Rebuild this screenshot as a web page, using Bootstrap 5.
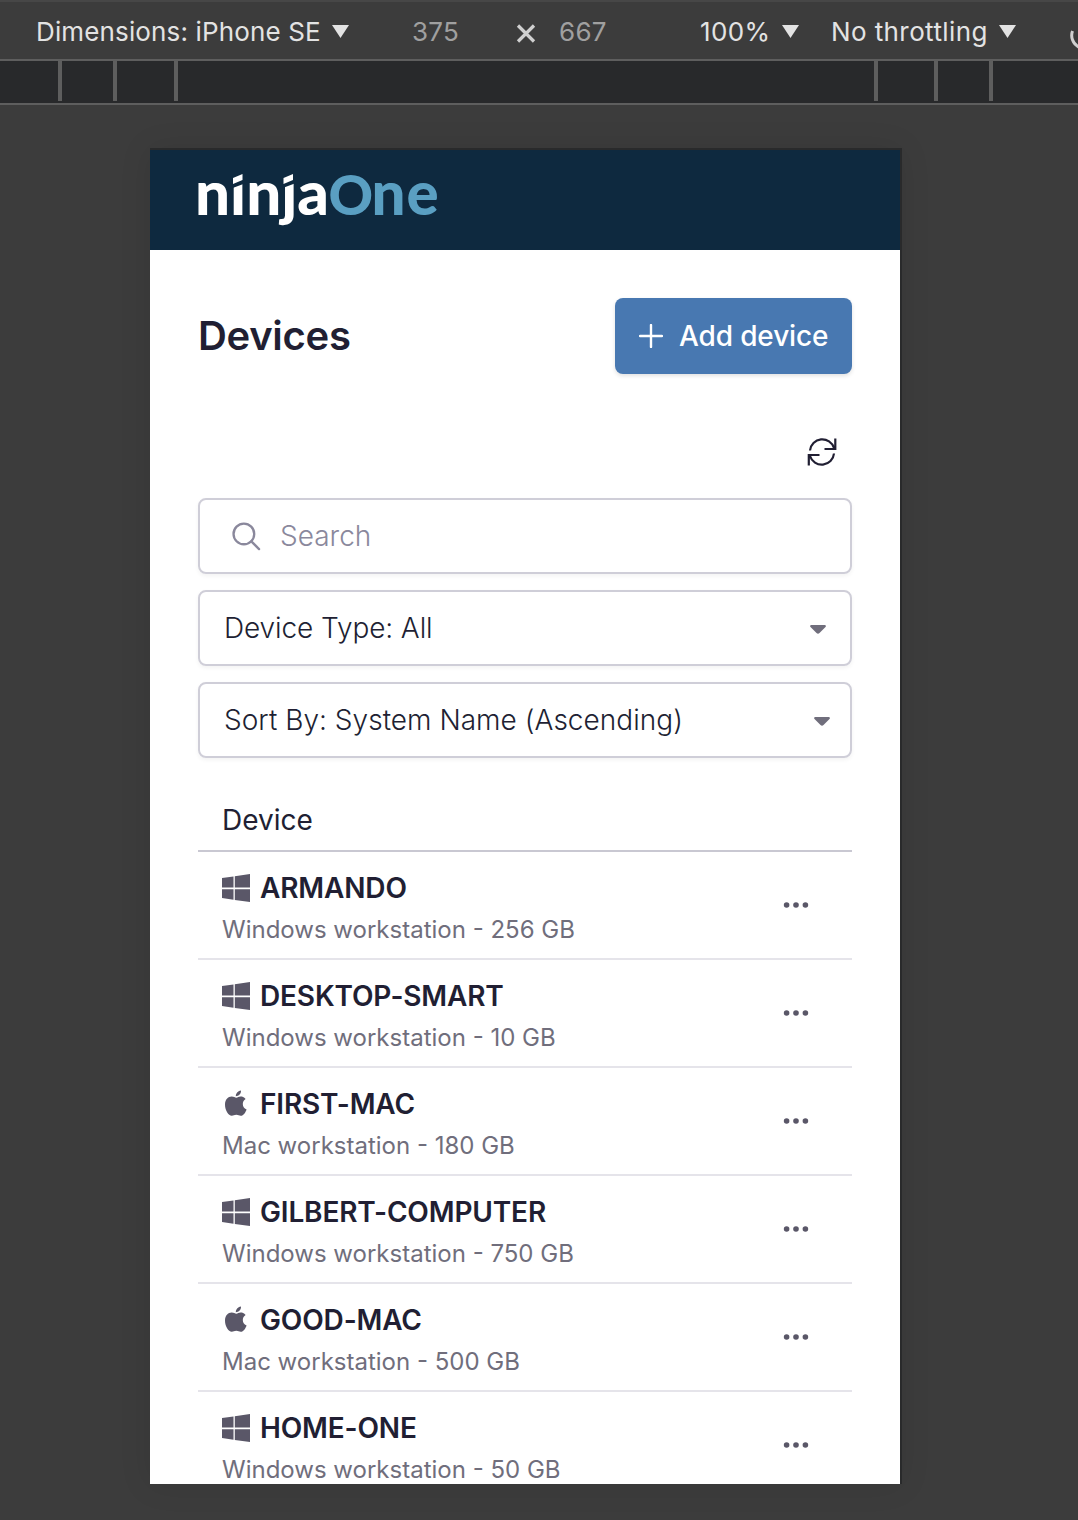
<!DOCTYPE html>
<html lang="en">
<head>
<meta charset="utf-8">
<meta name="viewport" content="width=device-width, initial-scale=1">
<title>Devices</title>
<link href="https://cdn.jsdelivr.net/npm/bootstrap@5.3.0/dist/css/bootstrap.min.css" rel="stylesheet">
<style>
  body { background: #3c3c3c; font-family: Inter, "Liberation Sans", sans-serif; color: #211f33; height: 1520px; overflow: hidden; }
  .toolbar { height: 61px; border-top: 2px solid #474747; border-bottom: 2px solid #5e5e5e; padding-left: 36px; font-size: 26px; line-height: 59px; color: #e3e3e3; white-space: nowrap; overflow: hidden; }
  .toolbar > * { flex: none; }
  .tool-dim { width: 376px; letter-spacing: .14px; }
  .tool-w { width: 103px; color: #a0a0a0; letter-spacing: .3px; }
  .tool-x { width: 44px; }
  .tool-h { width: 141px; color: #a0a0a0; letter-spacing: .3px; }
  .tool-zoom { width: 131px; letter-spacing: .4px; }
  .tool-net { width: 239px; letter-spacing: .4px; }
  .tri { width: 17px; height: 13px; fill: #e3e3e3; margin: 0 0 3px 11px; vertical-align: baseline; }
  .ruler { height: 44px; background: #28292b; border-bottom: 2px solid #5e5e5e; }
  .ruler span { width: 4px; height: 40px; background: #5e5e5e; }
  .phone { width: 750px; height: 1334px; margin: 45px 0 0 150px; background: #fff; box-shadow: 1px -1px 0 1px #292a2b, 0 0 30px rgba(0,0,0,.1); }
  .brandbar { height: 100px; background: #0e293f; padding-left: 38px; }
  .content-pad { padding: 48px 48px 0; }
  .page-title { font-size: 40px; font-weight: 600; line-height: 76px; letter-spacing: -.3px; }
  .btn-add { width: 237px; height: 76px; background: #4878b1; border-radius: 8px; color: #fff; font-size: 28px; font-weight: 500; letter-spacing: -.13px; padding: 0 0 0 24px; box-shadow: 0 2px 4px rgba(0,0,0,.12); }
  .refresh { height: 124px; padding: 63px 15px 0 0; }
  .field { height: 76px; border: 2px solid #cfced8; border-radius: 8px; padding: 0 24px; font-size: 28px; font-weight: 300; line-height: 72px; margin-bottom: 16px; box-shadow: 0 2px 4px rgba(0,0,0,.05); }
  .caret { margin-top: 2px; fill: #706e7c; }
  .thead-line { height: 78px; border-bottom: 2px solid #c9c8d2; padding: 24px 24px 0; font-size: 28px; line-height: 44px; }
  .device-row { height: 108px; border-bottom: 2px solid #e5e4ea; padding: 16px 24px 0; }
  .device-name { font-size: 28px; font-weight: 600; line-height: 40px; letter-spacing: -.15px; }
  .device-sub { font-size: 24px; line-height: 40px; color: #706e7c; margin-top: 2px; }
  .os { width: 28px; height: 28px; margin-right: 10px; fill: #5a5768; }
  .dots { width: 26px; height: 8px; fill: #5a5768; margin: 33px 19px 0 0; }
</style>
<script src="https://cdn.jsdelivr.net/npm/bootstrap@5.3.0/dist/js/bootstrap.bundle.min.js"></script>
</head>
<body>
<svg class="d-none">
  <symbol id="win" viewBox="0 0 28 28"><path d="M0 4.1 11.5 2.5V13.5H0ZM12.8 2.2 28 0V13.5H12.8ZM0 15.3H11.5V25.8L0 24.1ZM12.8 15.3H28V28L12.8 26Z"/></symbol>
  <symbol id="mac" viewBox="0 0 28 28"><path d="M14.4 7.7c-1.3 0-2.8-1.1-4.7-1.1C6 6.700 3 9.600 3 14.700c0 5.200 3.400 11.100 6.800 11.100 1.700 0 2.400-1 4.500-1s2.700 1 4.500 1c2.600 0 4.900-3.600 5.800-6.300-2.600-1.100-3.800-3-3.800-5.500 0-2.200 1.100-3.800 2.800-5-1.500-1.800-3.400-2.400-5-2.400-1.800 0-3 1.100-4.200 1.100ZM13.800 6.300C13.800 3.300 16.200.9 19 .6c.2 3.100-2.200 5.700-5.200 5.700Z"/></symbol>
  <symbol id="more" viewBox="0 0 26 8"><circle cx="3.600" cy="4" r="2.800"/><circle cx="13" cy="4" r="2.800"/><circle cx="22.400" cy="4" r="2.800"/></symbol>
  <symbol id="down" viewBox="0 0 17 13"><path d="M0 0h17L8.500 13Z"/></symbol>
  <symbol id="caret" viewBox="0 0 16 9"><path d="M1 0H15Q16.600.5 15.500 2L9.500 8Q8 9.500 6.500 8L.5 2Q-.6.5 1 0Z"/></symbol>
</svg>

<div class="toolbar d-flex">
  <div class="tool-dim">Dimensions: iPhone SE<svg class="tri"><use href="#down"/></svg></div>
  <div class="tool-w">375</div>
  <div class="tool-x d-flex align-items-center"><svg class="mt-1" width="22" height="20" viewBox="0 0 22 20"><path d="M3 2.500 19 18.500M19 2.500 3 18.500" stroke="#d0d0d0" stroke-width="3.200"/></svg></div>
  <div class="tool-h">667</div>
  <div class="tool-zoom">100%<svg class="tri"><use href="#down"/></svg></div>
  <div class="tool-net">No throttling<svg class="tri"><use href="#down"/></svg></div>
  <svg width="24" height="57" viewBox="0 0 24 57"><path d="M2.500 29a13 13 0 0 0 22 13" fill="none" stroke="#d0d0d0" stroke-width="3"/></svg>
</div>
<div class="ruler d-flex">
  <span style="margin-left:58px"></span><span style="margin-left:51px"></span><span style="margin-left:57px"></span><span style="margin-left:696px"></span><span style="margin-left:56px"></span><span style="margin-left:51px"></span>
</div>

<main class="phone overflow-hidden">
  <header class="brandbar">
    <svg width="270" height="100" viewBox="-10 0 270 100">
      <g font-family="Lato, sans-serif" font-weight="900" font-size="60">
        <text x="-3" y="65" fill="#fff" textLength="134" lengthAdjust="spacingAndGlyphs">ninja</text>
        <text x="130.500 173.500 208.500" y="65" fill="#5a9fc2"><tspan font-size="55">O</tspan>ne</text>
      </g>
      <path d="M32 18H48V33L32 39ZM82 18H98V33L82 39Z" fill="#0e293f"/>
      <path d="M35 28 44.500 24V30L35 34ZM85.500 28 95 24V30L85.500 34Z" fill="#fff"/>
    </svg>
  </header>
  <div class="content-pad">
    <div class="d-flex justify-content-between">
      <h1 class="page-title m-0">Devices</h1>
      <button class="btn btn-add d-flex align-items-center border-0"><svg class="me-3" width="24" height="24" viewBox="0 0 24 24"><path d="M12 1v22M1 12h22" stroke="#fff" stroke-width="2.400" stroke-linecap="round"/></svg><span>Add device</span></button>
    </div>
    <div class="refresh text-end lh-1">
      <svg width="30" height="30" viewBox="0 0 30 30" fill="none" stroke="#211f33" stroke-width="2.200"><path d="M3 13.500A12.300 12.300 0 0 1 27 11M28.300 1.500V12H17.500M27 16.500A12.300 12.300 0 0 1 3 19M1.800 28.500V18H12.500"/></svg>
    </div>
    <div class="field d-flex align-items-center" style="color:#8a889c">
      <svg class="ms-2" width="29" height="29" viewBox="0 0 30 30" fill="none" stroke="#8a889c" stroke-width="2.400" stroke-linecap="round"><circle cx="12.300" cy="12.300" r="10.700"/><path d="M20 20 28 28"/></svg>
      <span style="margin-left:19px">Search</span>
    </div>
    <div class="field d-flex align-items-center justify-content-between"><span style="letter-spacing:-.1px">Device Type: All</span><svg class="caret" width="16" height="9"><use href="#caret"/></svg></div>
    <div class="field d-flex align-items-center justify-content-between" style="padding-right:20px"><span style="letter-spacing:.03px">Sort By: System Name (Ascending)</span><svg class="caret" width="16" height="9"><use href="#caret"/></svg></div>
    <div class="thead-line"><span>Device</span></div>
    <div class="device-row d-flex justify-content-between"><div><div class="device-name d-flex align-items-center"><svg class="os"><use href="#win"/></svg><span>ARMANDO</span></div><div class="device-sub">Windows workstation - 256 GB</div></div><svg class="dots"><use href="#more"/></svg></div>
    <div class="device-row d-flex justify-content-between"><div><div class="device-name d-flex align-items-center"><svg class="os"><use href="#win"/></svg><span>DESKTOP-SMART</span></div><div class="device-sub">Windows workstation - 10 GB</div></div><svg class="dots"><use href="#more"/></svg></div>
    <div class="device-row d-flex justify-content-between"><div><div class="device-name d-flex align-items-center"><svg class="os"><use href="#mac"/></svg><span>FIRST-MAC</span></div><div class="device-sub">Mac workstation - 180 GB</div></div><svg class="dots"><use href="#more"/></svg></div>
    <div class="device-row d-flex justify-content-between"><div><div class="device-name d-flex align-items-center"><svg class="os"><use href="#win"/></svg><span>GILBERT-COMPUTER</span></div><div class="device-sub">Windows workstation - 750 GB</div></div><svg class="dots"><use href="#more"/></svg></div>
    <div class="device-row d-flex justify-content-between"><div><div class="device-name d-flex align-items-center"><svg class="os"><use href="#mac"/></svg><span>GOOD-MAC</span></div><div class="device-sub">Mac workstation - 500 GB</div></div><svg class="dots"><use href="#more"/></svg></div>
    <div class="device-row d-flex justify-content-between"><div><div class="device-name d-flex align-items-center"><svg class="os"><use href="#win"/></svg><span>HOME-ONE</span></div><div class="device-sub">Windows workstation - 50 GB</div></div><svg class="dots"><use href="#more"/></svg></div>
  </div>
</main>
</body>
</html>
